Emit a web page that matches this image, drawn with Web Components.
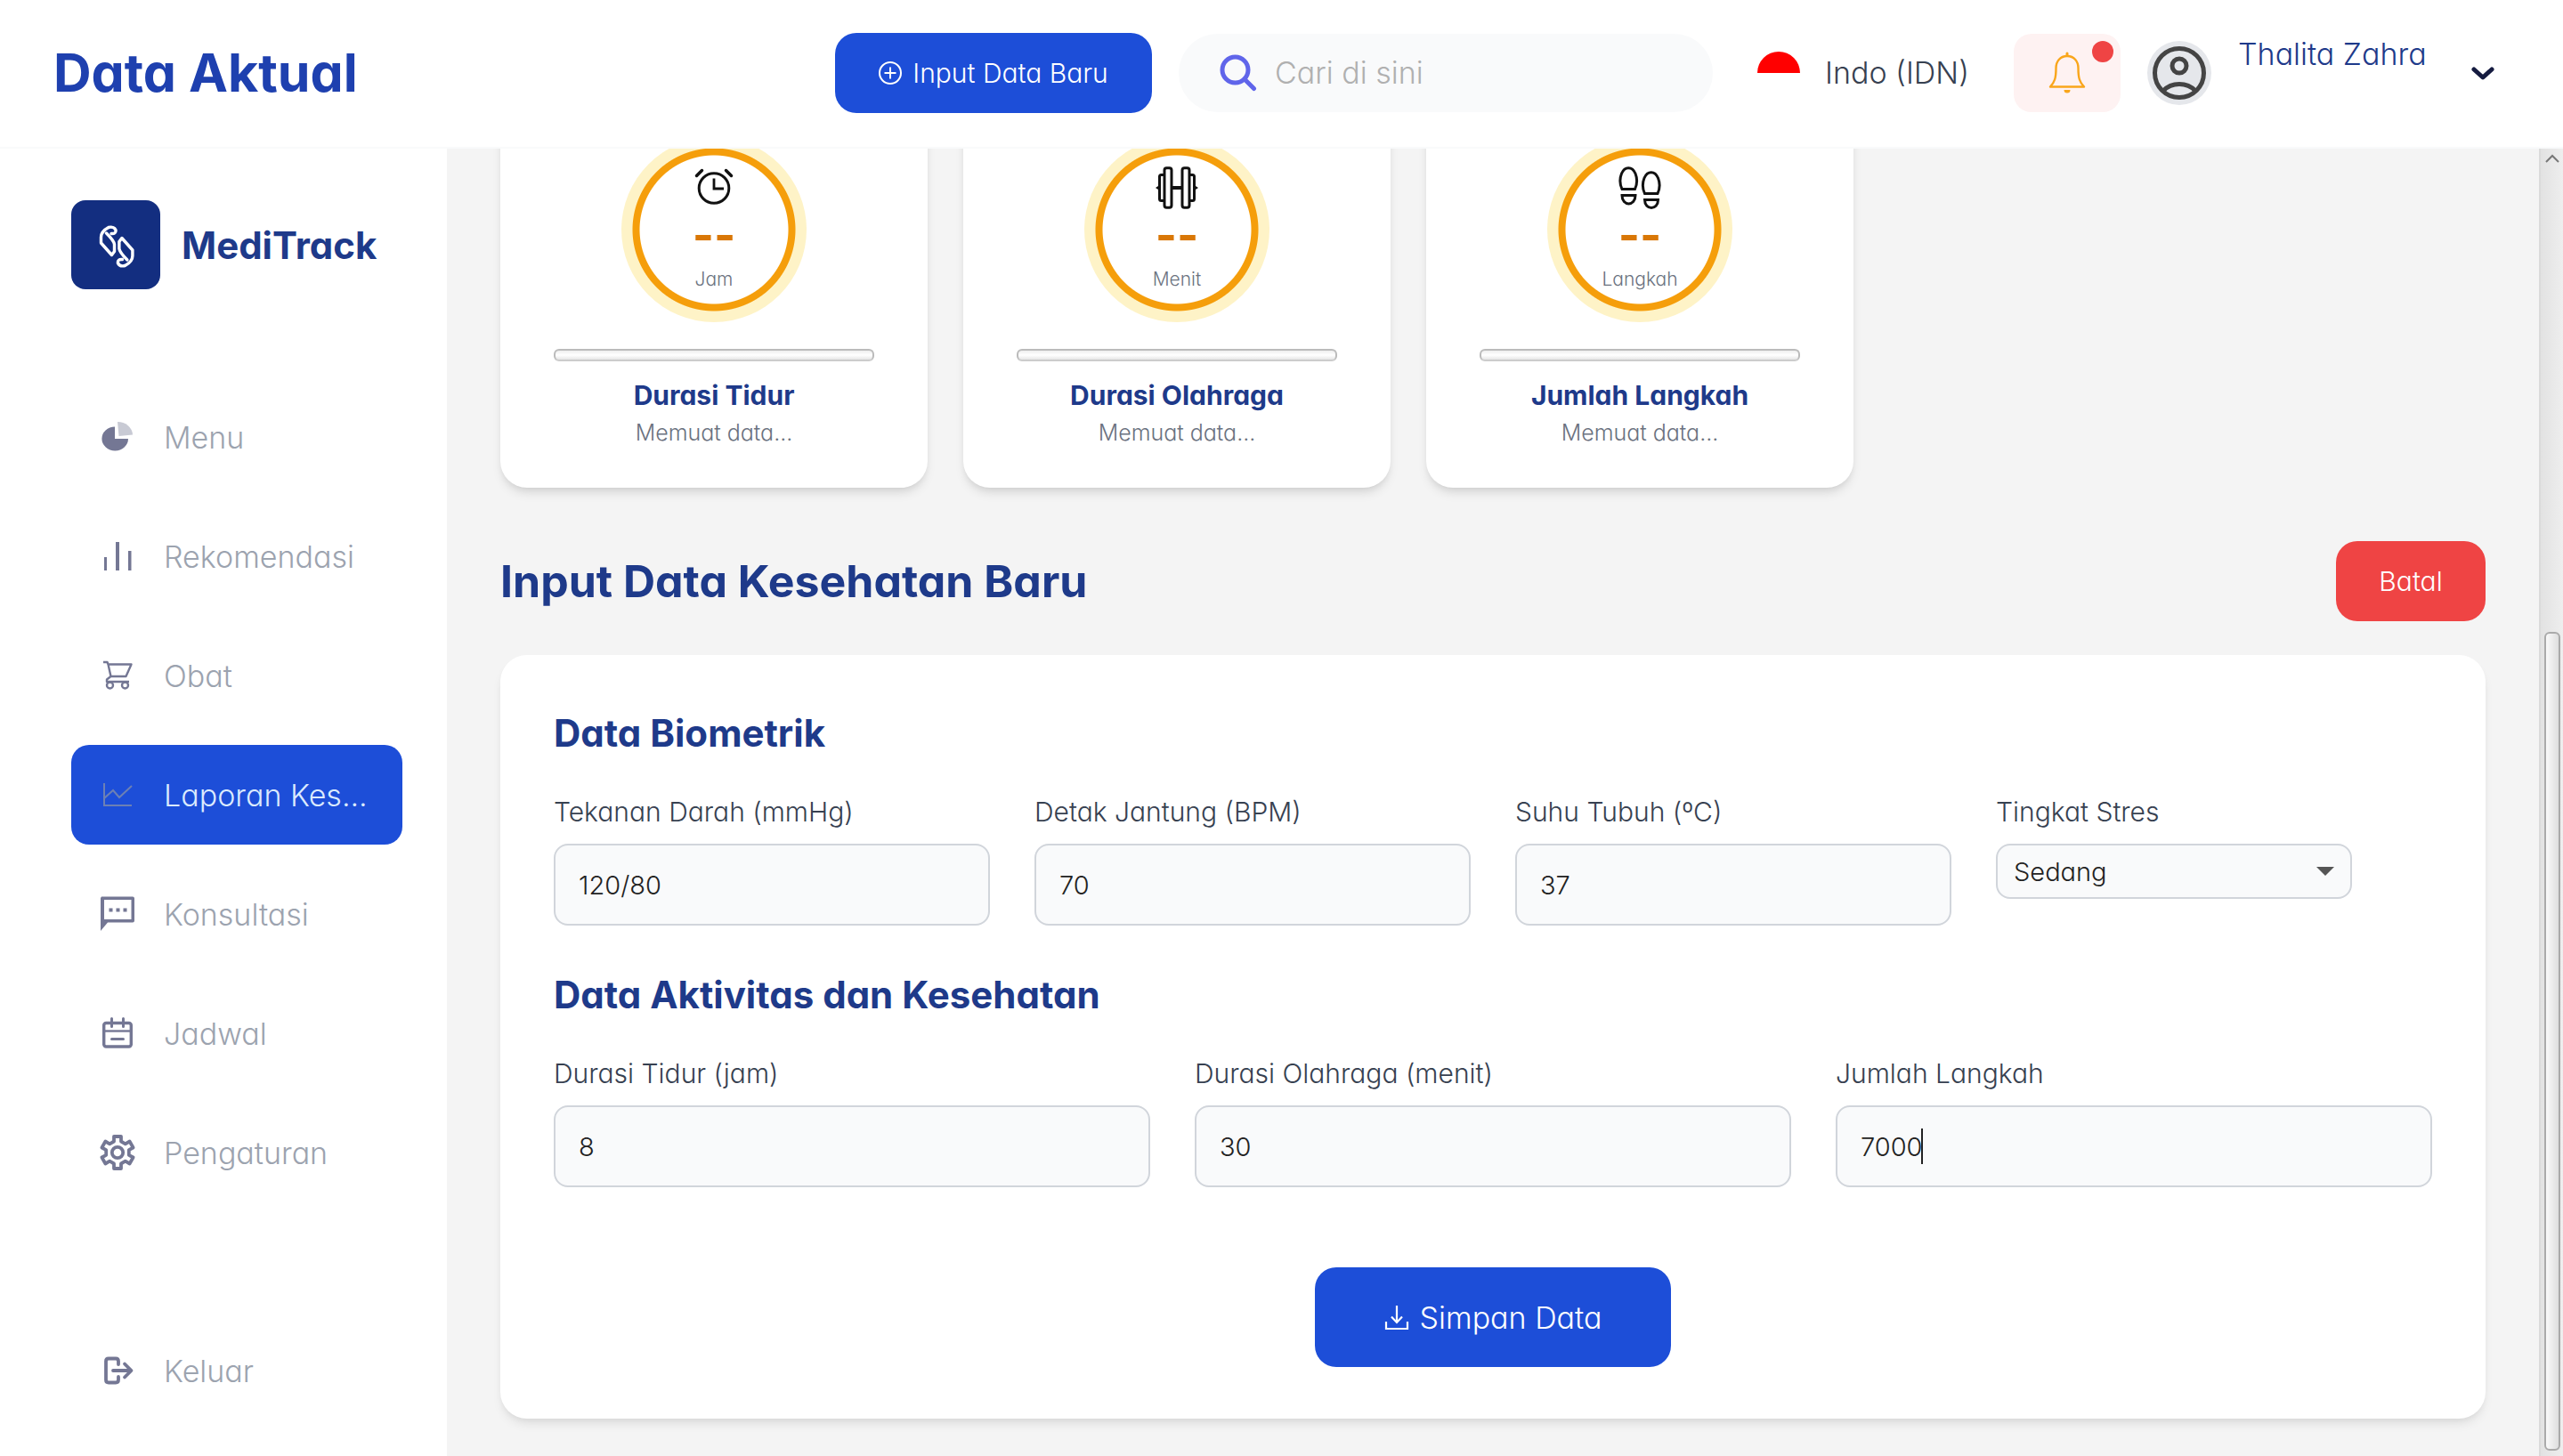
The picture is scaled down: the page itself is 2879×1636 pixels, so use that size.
<!DOCTYPE html>
<html lang="id">
<head>
<meta charset="utf-8">
<title>MediTrack - Data Aktual</title>
<style>
  html, body { margin: 0; height: 100%; }
  body {
    font-family: Inter, "Open Sans", sans-serif;
    font-weight: 350;
    font-feature-settings: "cv11";
    color: #374151;
    background: #fff;
    --blue: #1d4ed8;
    --navy: #1e3a8a;
    --muted: #9ca3af;
    --line: #d1d5db;
    --field: #f9fafb;
    --text-s: 25px;
    --text-m: 30px;
    --text-l: 34px;
    --text-xl: 42px;
  }
</style>
</head>
<body>
<mt-app></mt-app>

<script>
const ICONS = {
  logo: ['0 0 100 100', '<g fill="none" stroke="#fff" stroke-width="3.4" stroke-linejoin="round" stroke-linecap="round"><path d="M45 37.500q5.500.500 5-4Q48 29 42 30.500Q33.500 35 33.500 41.500V48L45.500 61.500L48.500 57.500V49.500Q48 45.500 39.500 37"/><path d="M45 37.500q5.500.500 5-4Q48 29 42 30.500Q33.500 35 33.500 41.500V48L45.500 61.500L48.500 57.500V49.500Q48 45.500 39.500 37" transform="rotate(180 51.200 52)"/></g>'],
  menu: ['0 0 44 44', '<path fill="#747794" d="M19 10.500V24h15A14.800 13.500 0 1 1 19 10.500z"/><path fill="#c8cad4" d="M22 5A17 15 0 0 1 39 19.500L23.500 21z"/>'],
  bars: ['0 0 44 44', '<path fill="#747794" d="M7 23h3v15H7zM20 6h4v32h-4zM34 16h3.500v22H34z"/>'],
  cart: ['0 0 44 44', '<g fill="none" stroke="#747794" stroke-width="2.400" stroke-linejoin="round"><path d="M6 7h4.500l1 2.500h26L31.500 23H14.500l-3-13.500M14.500 23L10 26.500V29h25"/><circle cx="13.500" cy="33" r="3.500"/><circle cx="30.500" cy="33" r="3.500"/></g>'],
  chart: ['0 0 44 44', '<g fill="none" stroke="#6c80b4" stroke-width="2"><path d="M7 9v25h31"/><path d="M7 26l10-9 7 8 14-13"/></g>'],
  chat: ['0 0 44 44', '<path fill="#747794" fill-rule="evenodd" d="M4 2.500h35q2 0 2 2v25q0 2-2 2H11L3 41V4zM7 6v22h30.500V6z"/><path fill="#747794" d="M12.500 15.500h4v4h-4zM20.500 15.500h4v4h-4zM28.500 15.500h4v4h-4z"/>'],
  calendar: ['0 0 44 44', '<g fill="none" stroke="#747794"><rect x="6.700" y="10.500" width="30.600" height="26.500" rx="2.500" stroke-width="3.400"/><path stroke-width="2.400" d="M7 19.500h30"/><path stroke-width="3" d="M15.500 5.500v9M28.500 5.500v9M15.500 28.500h13" stroke-linecap="round"/></g>'],
  gear: ['-22 -22 44 44', '<g fill="none" stroke="#747794" stroke-width="3.800" stroke-linejoin="round"><path d="M-4-12.500-4-18 4-18 4-12.500 8.800-9.700 13.600-12.500 17.600-5.500 12.800-2.800V2.800L17.600 5.500 13.600 12.500 8.800 9.700 4 12.500 4 18-4 18-4 12.500-8.800 9.700-13.600 12.500-17.600 5.500-12.800 2.800V-2.800L-17.600-5.500-13.600-12.500-8.800-9.700z"/><circle r="6.200"/></g>'],
  logout: ['0 0 44 44', '<g fill="none" stroke="#747794" stroke-width="3.800" stroke-linecap="round" stroke-linejoin="round"><path d="M23 15v-3.500q0-3-3-3h-8q-3 0-3 3v21q0 3 3 3h8q3 0 3-3V29"/><path d="M17 22h20M30 14.500l7.500 7.500-7.500 7.500"/></g>'],
  plus: ['0 0 26 26', '<g fill="none" stroke="#fff" stroke-width="2"><circle cx="13" cy="13" r="12"/><path d="M13 6.500v13M6.500 13h13"/></g>'],
  search: ['0 0 42 42', '<g fill="none" stroke="#6065ea" stroke-width="5"><circle cx="17.500" cy="17.500" r="14.500"/><path d="M28 28l10.500 10.500" stroke-linecap="round"/></g>'],
  flag: ['0 0 48 48', '<path fill="#f00" d="M0 24a24 24 0 0 1 48 0z"/><path fill="#fff" d="M0 24a24 24 0 0 0 48 0z"/>'],
  bell: ['0 0 44 48', '<path fill="none" stroke="#f9a61c" stroke-width="2.400" stroke-linejoin="round" d="M22 5c-8 0-12.500 6-12.500 13.500C9.500 30 8 34 3 39.500h38c-5-5.500-6.500-9.500-6.500-21C34.500 11 30 5 22 5z"/><path fill="#f9a61c" d="M20.500 2a1.500 1.500 0 0 1 3 0v4h-3zM18.500 43h7a3.500 3.500 0 0 1-7 0z"/>'],
  user: ['0 0 72 72', '<circle cx="36" cy="36" r="36" fill="#e5e7eb"/><g fill="none" stroke="#444" stroke-width="5"><circle cx="36" cy="36" r="27.500"/><circle cx="36" cy="28" r="8"/><path d="M18 56Q25 48.500 36 48.500T54 56"/></g>'],
  down: ['0 0 28 28', '<path fill="none" stroke="#151b40" stroke-width="5" stroke-linecap="round" stroke-linejoin="round" d="M4 10l10 9 10-9"/>'],
  alarm: ['0 0 48 48', '<g fill="none" stroke="#111" stroke-width="3"><circle cx="24" cy="24.500" r="16.800"/><path d="M24 13.500V25h11" stroke-width="2.800"/><path d="M4.500 10.500l6-6M43.500 10.500l-6-6" stroke-width="3.500" stroke-linecap="round"/></g>'],
  dumbbell: ['0 0 48 48', '<g fill="none" stroke="#111" stroke-width="3"><rect x="10" y="1.800" width="8" height="44.400" rx="2.500"/><rect x="30" y="1.800" width="8" height="44.400" rx="2.500"/><path d="M10 9.500H6.500Q4.500 9.500 4.500 11.500v25q0 2 2 2H10M38 9.500h3.500q2 0 2 2v25q0 2-2 2H38"/></g><path fill="#111" d="M18 22h12v4H18zM0 24l4.500-3v6zM48 24l-4.500-3v6z"/>'],
  steps: ['0 0 48 48', '<g fill="none" stroke="#111" stroke-width="3"><path d="M4 25.500C1.500 20 1.500 13 3.500 8 7-.500 15.500-.500 19 8c2 5 2 12-.500 17.500z"/><path d="M4 32.500h15c0 12.500-15 12.500-15 0z"/><path d="M29.500 30.500c-2.500-5.500-2.500-12.500-.500-17.500 3.500-8.500 12-8.500 15.500 0 2 5 2 12-.500 17.500z"/><path d="M29.500 37.500h15c0 12-15 12-15 0z"/></g>'],
  save: ['0 0 28 28', '<path fill="none" stroke="#fff" stroke-width="2.200" d="M14 1v19M8 13.500l6 6.500 6-6.500M2 19v8h24v-8"/>']
};

/* Base class: every element clones its markup and styles into an open root. */
class MtElement extends HTMLElement {
  connectedCallback() {
    if (this.shadowRoot) return;
    this.attachShadow({ mode: 'open' }).innerHTML = `<style>*{box-sizing:border-box}button,input,select{font:inherit;font-feature-settings:inherit;margin:0}</style>` + this.render();
  }
  attr(name, fallback = '') { return this.getAttribute(name) ?? fallback; }
}

customElements.define('mt-icon', class extends MtElement {
  render() {
    const [box, body] = ICONS[this.attr('name')];
    return `<style>:host{display:block;flex:none;width:44px;height:44px}svg{display:block;width:100%;height:100%}</style>
      <svg viewBox="${box}" aria-hidden="true">${body}</svg>`;
  }
});

customElements.define('mt-button', class extends MtElement {
  render() {
    return `<style>
      :host{display:block;flex:none}
      button{display:flex;align-items:center;justify-content:center;gap:12px;width:100%;height:90px;padding:0 24px;border:0;border-radius:24px;background:var(--blue);color:#fff;font-size:var(--text-m);white-space:nowrap}
      :host([tone=danger]) button{background:#ef4444}
      :host([size=large]) button{height:112px;font-size:var(--text-l)}
    </style><button type="button"><slot name="icon"></slot><slot></slot></button>`;
  }
});

customElements.define('mt-header', class extends MtElement {
  render() {
    return `<style>
      :host{display:block}
      header{display:flex;align-items:center;gap:30px;height:167px;padding:0 60px 2px;border-bottom:2px solid #f9fafb;background:#fff}
      h1{flex:1;margin:0;font-size:59px;line-height:84px;font-weight:700;color:#1e40af}
      .new{width:356px}
      .new mt-icon{width:26px;height:26px}
      .search{display:flex;align-items:center;gap:20px;width:600px;height:88px;padding:0 46px;border-radius:44px;background:var(--field)}
      .search mt-icon{width:42px;height:42px}
      .search input{flex:1;min-width:0;padding:0;border:0;background:none;outline:0;font-size:var(--text-l);color:#333}
      .search input::placeholder{color:#b0b0b0;opacity:1}
      button{border:0;background:none;padding:0;color:inherit}
      .lang{display:flex;align-items:center;gap:28px;width:278px;padding:0 20px;font-size:var(--text-l);white-space:nowrap}
      .lang mt-icon{width:48px;height:48px}
      .bell{position:relative;display:flex;align-items:center;justify-content:center;width:120px;height:88px;border-radius:20px;background:#fef2f2}
      .bell mt-icon{height:48px}
      .dot{position:absolute;top:8px;right:8px;width:24px;height:24px;border-radius:50%;background:#ef4444}
      .avatar{width:72px;height:72px}
      .who{width:215px;font-size:var(--text-l);line-height:43px;color:var(--navy);white-space:nowrap}
      .who div{height:43px}
      .open{display:flex;justify-content:center;width:60px}
      .open mt-icon{width:28px;height:28px}
    </style>
    <header>
      <h1>Data Aktual</h1>
      <mt-button class="new"><mt-icon slot="icon" name="plus"></mt-icon>Input Data Baru</mt-button>
      <label class="search"><mt-icon name="search"></mt-icon><input type="search" placeholder="Cari di sini" aria-label="Cari"></label>
      <button class="lang" type="button"><mt-icon name="flag"></mt-icon>Indo (IDN)</button>
      <button class="bell" type="button" aria-label="Notifikasi"><mt-icon name="bell"></mt-icon><span class="dot"></span></button>
      <mt-icon class="avatar" name="user"></mt-icon>
      <div class="who"><div>Thalita Zahra</div><div></div></div>
      <button class="open" type="button" aria-label="Profil"><mt-icon name="down"></mt-icon></button>
    </header>`;
  }
});

customElements.define('mt-nav-item', class extends MtElement {
  render() {
    return `<style>
      :host{display:block}
      a{display:flex;align-items:center;gap:30px;height:112px;padding:0 30px;border-radius:20px;color:var(--muted);font-size:var(--text-l);white-space:nowrap;text-decoration:none}
      :host([active]) a{background:var(--blue);color:#dbeafe}
    </style><a href="#"><mt-icon name="${this.attr('icon')}"></mt-icon><slot></slot></a>`;
  }
});

customElements.define('mt-sidebar', class extends MtElement {
  render() {
    return `<style>
      :host{display:flex;flex-direction:column;flex:none;width:502px;padding:58px 50px 40px 80px;box-sizing:border-box;background:#fff}
      .brand{display:flex;align-items:center;gap:24px;margin-bottom:110px;font-size:var(--text-xl);font-weight:700;color:var(--navy)}
      .brand mt-icon{width:100px;height:100px;border-radius:16px;background:#132e80}
      nav{display:flex;flex-direction:column;gap:22px}
      .exit{margin-top:auto}
    </style>
    <div class="brand"><mt-icon name="logo"></mt-icon>MediTrack</div>
    <nav>
      <mt-nav-item icon="menu">Menu</mt-nav-item>
      <mt-nav-item icon="bars">Rekomendasi</mt-nav-item>
      <mt-nav-item icon="cart">Obat</mt-nav-item>
      <mt-nav-item icon="chart" active>Laporan Kes...</mt-nav-item>
      <mt-nav-item icon="chat">Konsultasi</mt-nav-item>
      <mt-nav-item icon="calendar">Jadwal</mt-nav-item>
      <mt-nav-item icon="gear">Pengaturan</mt-nav-item>
    </nav>
    <mt-nav-item class="exit" icon="logout">Keluar</mt-nav-item>`;
  }
});

customElements.define('mt-metric', class extends MtElement {
  render() {
    return `<style>
      :host{display:flex;flex-direction:column;align-items:center;box-sizing:border-box;width:480px;padding:60px 60px 44px;border-radius:30px;background:#fff;box-shadow:0 8px 12px -2px rgba(0,0,0,.1),0 4px 8px -4px rgba(0,0,0,.1)}
      .ring{display:flex;flex-direction:column;align-items:center;justify-content:center;gap:4px;width:208px;height:208px;border-radius:50%;background:radial-gradient(circle closest-side,#fff 83px,#f59e0b 84px,#f59e0b 91px,#fef3c7 92px)}
      .ring mt-icon{width:48px;height:48px}
      .value{padding-bottom:4px;font-size:52px;line-height:52px;font-weight:700;color:#d97706}
      .unit{font-size:21px;line-height:30px;color:#6b7280}
      .bar{width:100%;height:14px;margin:30px 0 16px;border:2px solid #bbb;border-bottom-color:#ccc;border-radius:6px;background:linear-gradient(#eee,#fff 50%,#e6e6e6)}
      h3{margin:0;font-size:var(--text-m);line-height:44px;font-weight:700;color:var(--navy)}
      p{margin:2px 0 0;font-size:var(--text-s);line-height:36px;color:#6b7280}
    </style>
    <div class="ring"><mt-icon name="${this.attr('icon')}"></mt-icon><span class="value">--</span><span class="unit">${this.attr('unit')}</span></div>
    <div class="bar" role="progressbar"></div>
    <h3><slot></slot></h3><p>Memuat data...</p>`;
  }
});

customElements.define('mt-field', class extends MtElement {
  render() {
    const options = this.attr('options');
    const control = options
      ? `<div class="pick"><select id="c">${options.split(',').map(o => `<option${o === this.attr('value') ? ' selected' : ''}>${o}</option>`).join('')}</select><svg viewBox="0 0 20 10" aria-hidden="true"><path fill="#555" d="M0 0h20L10 10z"/></svg></div>`
      : `<div class="box"><input id="c" type="text" value="${this.attr('value')}">${this.hasAttribute('editing') ? '<span class="caret"></span>' : ''}</div>`;
    return `<style>
      :host{display:flex;flex-direction:column;gap:14px;min-width:0}
      label{font-size:var(--text-m);line-height:44px;white-space:nowrap}
      input,select{display:block;width:100%;border:2px solid var(--line);border-radius:16px;background:var(--field);color:#222;font-size:29px;outline:0}
      input{height:92px;padding:0 26px}
      .box,.pick{position:relative}
      .pick{width:400px}
      select{height:62px;padding:0 18px;appearance:none}
      svg{position:absolute;right:20px;top:26px;width:20px;height:10px;pointer-events:none}
      .caret{position:absolute;left:96px;top:26px;width:2px;height:40px;background:#222}
    </style><label for="c">${this.attr('label')}</label>${control}`;
  }
});

customElements.define('mt-fieldset', class extends MtElement {
  render() {
    return `<style>
      :host{display:block}
      h3{margin:0 0 38px;font-size:var(--text-xl);line-height:56px;font-weight:700;color:var(--navy)}
      .grid{display:grid;grid-template-columns:repeat(${this.attr('columns', '4')},minmax(0,1fr));gap:50px;align-items:start}
    </style><h3>${this.attr('heading')}</h3><div class="grid"><slot></slot></div>`;
  }
});

customElements.define('mt-report', class extends MtElement {
  render() {
    return `<style>
      :host{display:flex;flex-direction:column;justify-content:flex-end;flex:1;min-width:0;min-height:0;overflow:hidden;background:#f4f4f4}
      main{flex:none;padding:60px 60px 42px}
      .metrics{display:flex;gap:40px}
      .title{display:flex;align-items:center;justify-content:space-between;margin:60px 0 38px}
      h2{margin:0;font-size:50px;line-height:72px;font-weight:700;color:var(--navy)}
      .cancel{width:168px}
      form{display:flex;flex-direction:column;gap:50px;padding:60px 60px 58px;border-radius:30px;background:#fff;box-shadow:0 8px 12px -2px rgba(0,0,0,.08),0 4px 8px -4px rgba(0,0,0,.08)}
      .save{align-self:center;width:400px;margin-top:40px}
      .save mt-icon{width:28px;height:28px}
    </style>
    <main>
      <div class="metrics">
        <mt-metric icon="alarm" unit="Jam">Durasi Tidur</mt-metric>
        <mt-metric icon="dumbbell" unit="Menit">Durasi Olahraga</mt-metric>
        <mt-metric icon="steps" unit="Langkah">Jumlah Langkah</mt-metric>
      </div>
      <div class="title"><h2>Input Data Kesehatan Baru</h2><mt-button class="cancel" tone="danger">Batal</mt-button></div>
      <form>
        <mt-fieldset heading="Data Biometrik">
          <mt-field label="Tekanan Darah (mmHg)" value="120/80"></mt-field>
          <mt-field label="Detak Jantung (BPM)" value="70"></mt-field>
          <mt-field label="Suhu Tubuh (ºC)" value="37"></mt-field>
          <mt-field label="Tingkat Stres" value="Sedang" options="Sedang"></mt-field>
        </mt-fieldset>
        <mt-fieldset heading="Data Aktivitas dan Kesehatan" columns="3">
          <mt-field label="Durasi Tidur (jam)" value="8"></mt-field>
          <mt-field label="Durasi Olahraga (menit)" value="30"></mt-field>
          <mt-field label="Jumlah Langkah" value="7000" editing></mt-field>
        </mt-fieldset>
        <mt-button class="save" size="large"><mt-icon slot="icon" name="save"></mt-icon>Simpan Data</mt-button>
      </form>
    </main>`;
  }
});

customElements.define('mt-scrollbar', class extends MtElement {
  render() {
    return `<style>
      :host{display:flex;flex-direction:column;flex:none;align-items:center;width:27px;box-sizing:border-box;padding:6px 0;border-left:2px solid #dadada;background:linear-gradient(90deg,#e2e2e2,#eee)}
      svg{width:16px;height:10px}
      .rest{flex:365}
      .thumb{flex:635;width:18px;border:2px solid #aaa;border-radius:6px;background:linear-gradient(90deg,#fafafa,#dedede)}
    </style><svg viewBox="0 0 16 10"><path fill="none" stroke="#777" stroke-width="2" d="M1 9l7-7 7 7"/></svg><div class="rest"></div><div class="thumb"></div>`;
  }
});

customElements.define('mt-app', class extends MtElement {
  render() {
    return `<style>
      :host{display:flex;flex-direction:column;height:100vh;overflow:hidden}
      mt-header{flex:none}
      .body{display:flex;flex:1;min-height:0}
    </style><mt-header></mt-header><div class="body"><mt-sidebar></mt-sidebar><mt-report></mt-report><mt-scrollbar></mt-scrollbar></div>`;
  }
});
</script>
</body>
</html>
